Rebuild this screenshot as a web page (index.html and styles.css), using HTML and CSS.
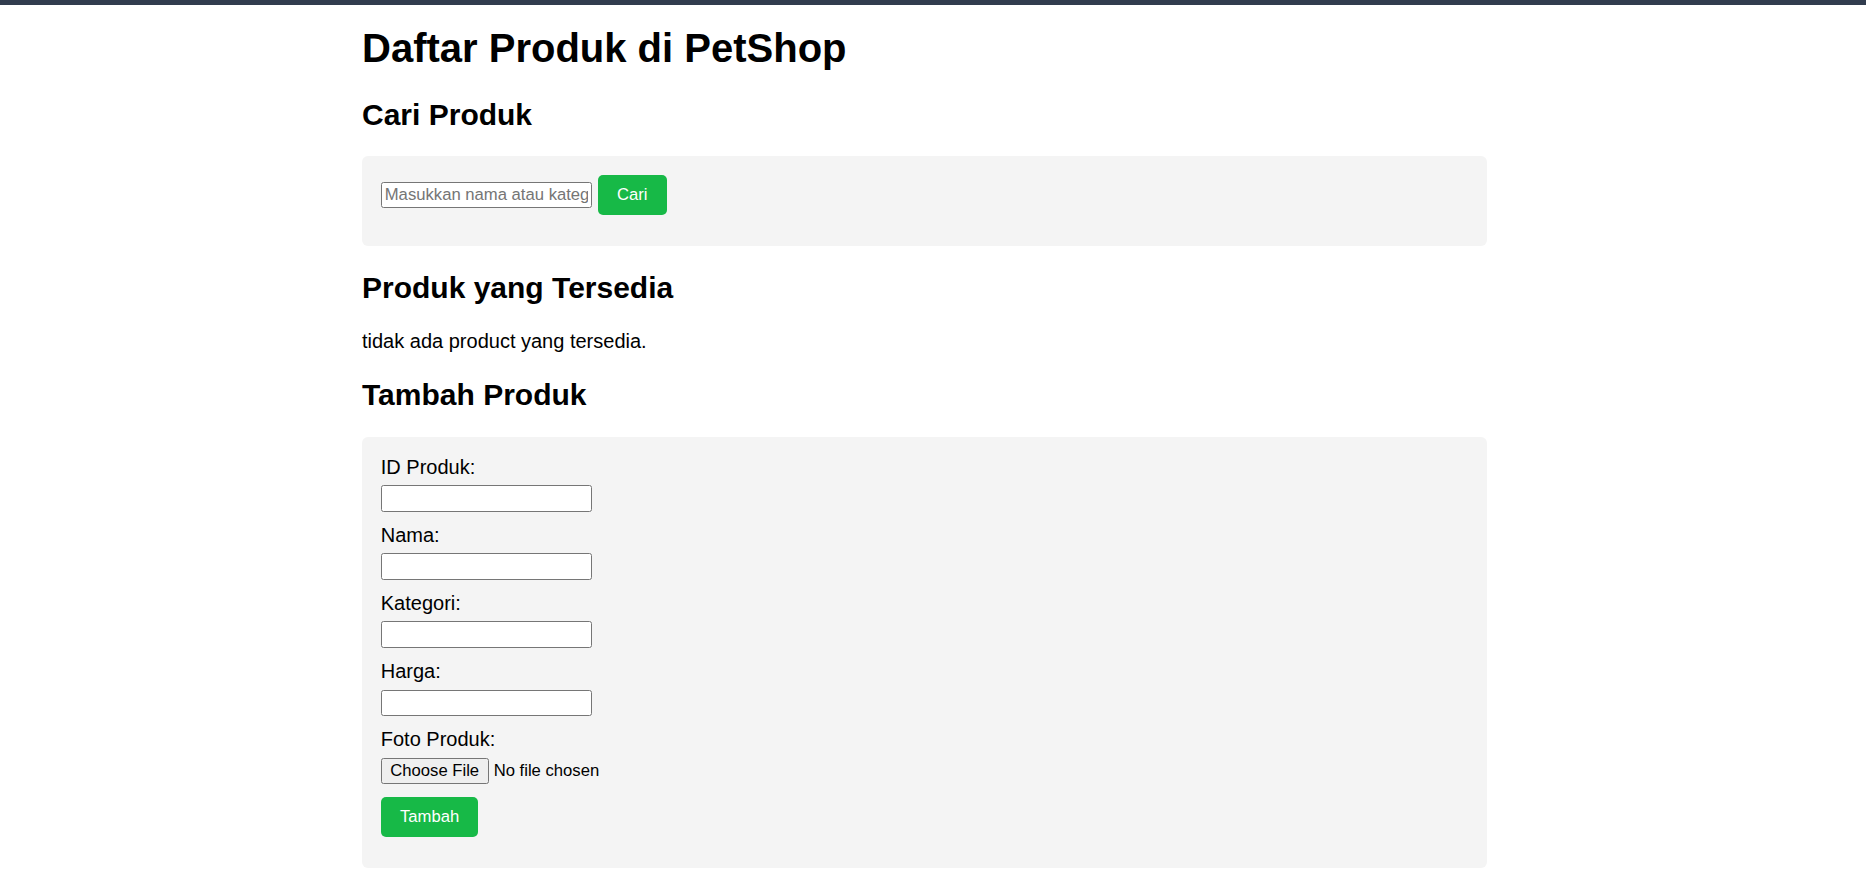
FILE: index.html
```html
<!DOCTYPE html>
<html lang="id">
<head>
<meta charset="utf-8">
<title>Daftar Produk di PetShop</title>
<link rel="stylesheet" href="styles.css">
</head>
<body>
<div class="topbar"></div>
<div class="page">
  <main class="container">
    <h1>Daftar Produk di PetShop</h1>

    <h2>Cari Produk</h2>
    <section class="card">
      <form class="search-form">
        <input class="text-input" type="text" placeholder="Masukkan nama atau kategori">
        <button class="btn" type="button">Cari</button>
      </form>
    </section>

    <h2>Produk yang Tersedia</h2>
    <p class="empty">tidak ada product yang tersedia.</p>

    <h2>Tambah Produk</h2>
    <section class="card">
      <form class="add-form">
        <div class="field">
          <label class="label" for="id">ID Produk:</label>
          <input class="text-input" id="id" type="text">
        </div>
        <div class="field">
          <label class="label" for="nama">Nama:</label>
          <input class="text-input" id="nama" type="text">
        </div>
        <div class="field">
          <label class="label" for="kategori">Kategori:</label>
          <input class="text-input" id="kategori" type="text">
        </div>
        <div class="field">
          <label class="label" for="harga">Harga:</label>
          <input class="text-input" id="harga" type="text">
        </div>
        <div class="field">
          <label class="label" for="foto">Foto Produk:</label>
          <input class="file-input" id="foto" type="file">
        </div>
        <button class="btn btn-submit" type="button">Tambah</button>
      </form>
    </section>
  </main>
</div>
</body>
</html>
```

FILE: styles.css
```css
html, body {
  margin: 0;
  padding: 0;
  background: #ffffff;
}

body {
  font-family: "Liberation Sans", Arial, sans-serif;
  font-size: 20px;
  color: #000000;
}

.topbar {
  height: 5px;
  background: #313c4e;
}

.page {
  padding-right: 17px;
}

.container {
  width: 1125px;
  margin: 0 auto;
}

h1 {
  font-size: 40px;
  font-weight: bold;
  line-height: normal;
  margin: 20.8px 0 26.8px;
}

h2 {
  font-size: 30px;
  font-weight: bold;
  line-height: normal;
  margin: 24.9px 0;
}

.empty {
  margin: 20px 0;
  line-height: normal;
}

.card {
  background: #f4f4f4;
  border-radius: 6px;
  padding: 18.75px;
  margin-bottom: 25px;
}

.search-form {
  display: flex;
  align-items: center;
  gap: 5.5px;
  margin-bottom: 12.5px;
}

.text-input {
  display: block;
  box-sizing: border-box;
  width: 211.5px;
  height: 26.4px;
  margin: 0;
  padding: 1.25px 3px;
  border: 1px solid #767676;
  border-radius: 2.5px;
  background: #ffffff;
  font-family: "Liberation Sans", Arial, sans-serif;
  font-size: 16.67px;
  color: #000000;
}

.text-input::placeholder {
  color: #757575;
}

.btn {
  box-sizing: border-box;
  height: 40px;
  padding: 0 19.2px;
  margin: 0;
  border: none;
  border-radius: 5px;
  background: #17b947;
  color: #ffffff;
  font-family: "Liberation Sans", Arial, sans-serif;
  font-size: 16.67px;
  line-height: normal;
}

.btn-submit {
  display: block;
  margin-bottom: 12.5px;
}

.field {
  margin-bottom: 12.5px;
}

.label {
  display: block;
  line-height: normal;
  margin-bottom: 6.25px;
}

.file-input {
  display: block;
  margin: 0;
  font-family: "Liberation Sans", Arial, sans-serif;
  font-size: 16.67px;
  color: #000000;
  height: 26.4px;
}

.file-input::file-selector-button {
  box-sizing: border-box;
  height: 26.4px;
  padding: 0 8.5px;
  margin: 0 5px 0 0;
  border: 1px solid #767676;
  border-radius: 2.5px;
  background: #efefef;
  color: #000000;
  font-family: "Liberation Sans", Arial, sans-serif;
  font-size: 16.67px;
}
```
